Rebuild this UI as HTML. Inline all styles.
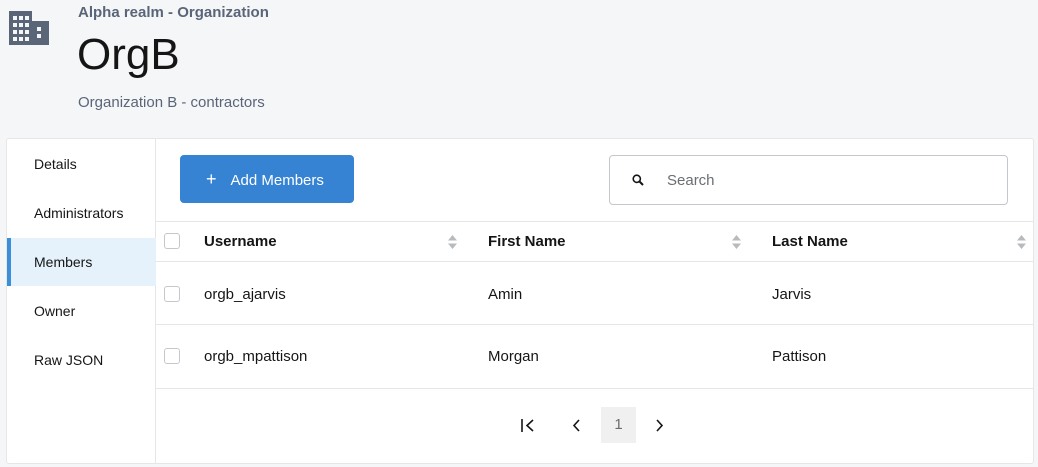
<!DOCTYPE html>
<html><head><style>
*{box-sizing:border-box;margin:0;padding:0}
body{width:1038px;height:467px;background:#f5f6f8;font-family:"Liberation Sans",sans-serif;position:relative;overflow:hidden;color:#151515}
.a{position:absolute}
.side div{position:absolute;left:0;width:149px;height:48px;line-height:48px;padding-left:27px;font-size:14px;color:#151515}
th,td{font-size:14px}
.cb{position:absolute;width:16px;height:16px;border:1px solid #c4c8cc;border-radius:3px;background:#fff}
.hl{position:absolute;left:155px;right:4px;height:1px;background:#e4e6e8}
.sort{position:absolute;width:8px}
</style></head><body>
<svg class="a" style="left:9px;top:11px" width="40" height="34" viewBox="0 0 40 34"><path fill="#5a6578" d="M0 0h23v10h17v24H0z"/><g fill="#f5f6f8"><rect x="4" y="5" width="4" height="4"/><rect x="10" y="5" width="4" height="4"/><rect x="16" y="5" width="4" height="4"/><rect x="4" y="12" width="4" height="4"/><rect x="10" y="12" width="4" height="4"/><rect x="16" y="12" width="4" height="4"/><rect x="4" y="19" width="4" height="4"/><rect x="10" y="19" width="4" height="4"/><rect x="16" y="19" width="4" height="4"/><rect x="4" y="26" width="4" height="4"/><rect x="10" y="26" width="4" height="4"/><rect x="16" y="26" width="4" height="4"/><rect x="28" y="16" width="4" height="4"/><rect x="28" y="23" width="4" height="4"/></g></svg>
<div class="a" style="left:78px;top:4px;font-size:15px;font-weight:bold;color:#5a6578">Alpha realm - Organization</div>
<div class="a" style="left:77px;top:30px;font-size:44px;color:#151515;font-weight:300">OrgB</div>
<div class="a" style="left:78px;top:94px;font-size:15px;color:#5a6578">Organization B - contractors</div>
<div class="a" style="left:6px;top:138px;width:1028px;height:326px;background:#fff;border:1px solid #e4e6e8;border-radius:3px"></div>
<div class="a" style="left:155px;top:139px;width:1px;height:325px;background:#e4e6e8"></div>
<div class="side a" style="left:7px;top:140px">
<div style="top:0">Details</div>
<div style="top:49px">Administrators</div>
<div style="top:98px;background:#e5f2fb;border-left:4px solid #3b8fd9;padding-left:23px">Members</div>
<div style="top:147px">Owner</div>
<div style="top:196px">Raw JSON</div>
</div>
<div class="a" style="left:180px;top:155px;width:174px;height:48px;background:#3583d2;border-radius:4px;color:#fff;font-size:15px;line-height:48px;padding-left:26px"><span style="font-size:18px;margin-right:14px">+</span>Add Members</div>
<div class="a" style="left:609px;top:155px;width:399px;height:50px;border:1px solid #c4c8cc;border-radius:4px"></div>
<svg class="a" style="left:632px;top:174px" width="12" height="12" viewBox="0 0 12 12"><circle cx="4.8" cy="4.8" r="3.6" fill="none" stroke="#151515" stroke-width="1.6"/><path d="M7.5 7.5l3.5 3.5" stroke="#151515" stroke-width="2"/></svg>
<div class="a" style="left:667px;top:172px;font-size:15px;color:#6a6e73">Search</div>
<div class="hl" style="top:221px"></div>
<div class="hl" style="top:261px"></div>
<div class="hl" style="top:324px"></div>
<div class="hl" style="top:388px"></div>
<div class="cb" style="left:164px;top:233px"></div>
<div class="cb" style="left:164px;top:286px"></div>
<div class="cb" style="left:164px;top:348px"></div>
<div class="a" style="left:204px;top:233px;font-size:15px;font-weight:bold">Username</div>
<div class="a" style="left:488px;top:233px;font-size:15px;font-weight:bold">First Name</div>
<div class="a" style="left:772px;top:233px;font-size:15px;font-weight:bold">Last Name</div>
<svg class="a" style="left:448px;top:235px" width="9" height="14"><path d="M4.5 0L9 5.5H0zM4.5 14L9 8.5H0z" fill="#b8bbbe"/></svg>
<svg class="a" style="left:732px;top:235px" width="9" height="14"><path d="M4.5 0L9 5.5H0zM4.5 14L9 8.5H0z" fill="#b8bbbe"/></svg>
<svg class="a" style="left:1017px;top:235px" width="9" height="14"><path d="M4.5 0L9 5.5H0zM4.5 14L9 8.5H0z" fill="#b8bbbe"/></svg>
<div class="a" style="left:204px;top:286px;font-size:15px">orgb_ajarvis</div>
<div class="a" style="left:488px;top:286px;font-size:15px">Amin</div>
<div class="a" style="left:772px;top:286px;font-size:15px">Jarvis</div>
<div class="a" style="left:204px;top:348px;font-size:15px">orgb_mpattison</div>
<div class="a" style="left:488px;top:348px;font-size:15px">Morgan</div>
<div class="a" style="left:772px;top:348px;font-size:15px">Pattison</div>
<svg class="a" style="left:521px;top:419px" width="14" height="13"><path d="M1 0v13" stroke="#151515" stroke-width="1.6"/><path d="M12 1L6 6.5 12 12" fill="none" stroke="#151515" stroke-width="1.6"/></svg>
<svg class="a" style="left:572px;top:419px" width="9" height="13"><path d="M7 1L2 6.5 7 12" fill="none" stroke="#151515" stroke-width="1.6"/></svg>
<div class="a" style="left:601px;top:407px;width:35px;height:36px;background:#f0f0f0;text-align:center;line-height:36px;font-size:15px;color:#6a6e73">1</div>
<svg class="a" style="left:655px;top:419px" width="9" height="13"><path d="M2 1L7 6.5 2 12" fill="none" stroke="#151515" stroke-width="1.6"/></svg>
</body></html>
